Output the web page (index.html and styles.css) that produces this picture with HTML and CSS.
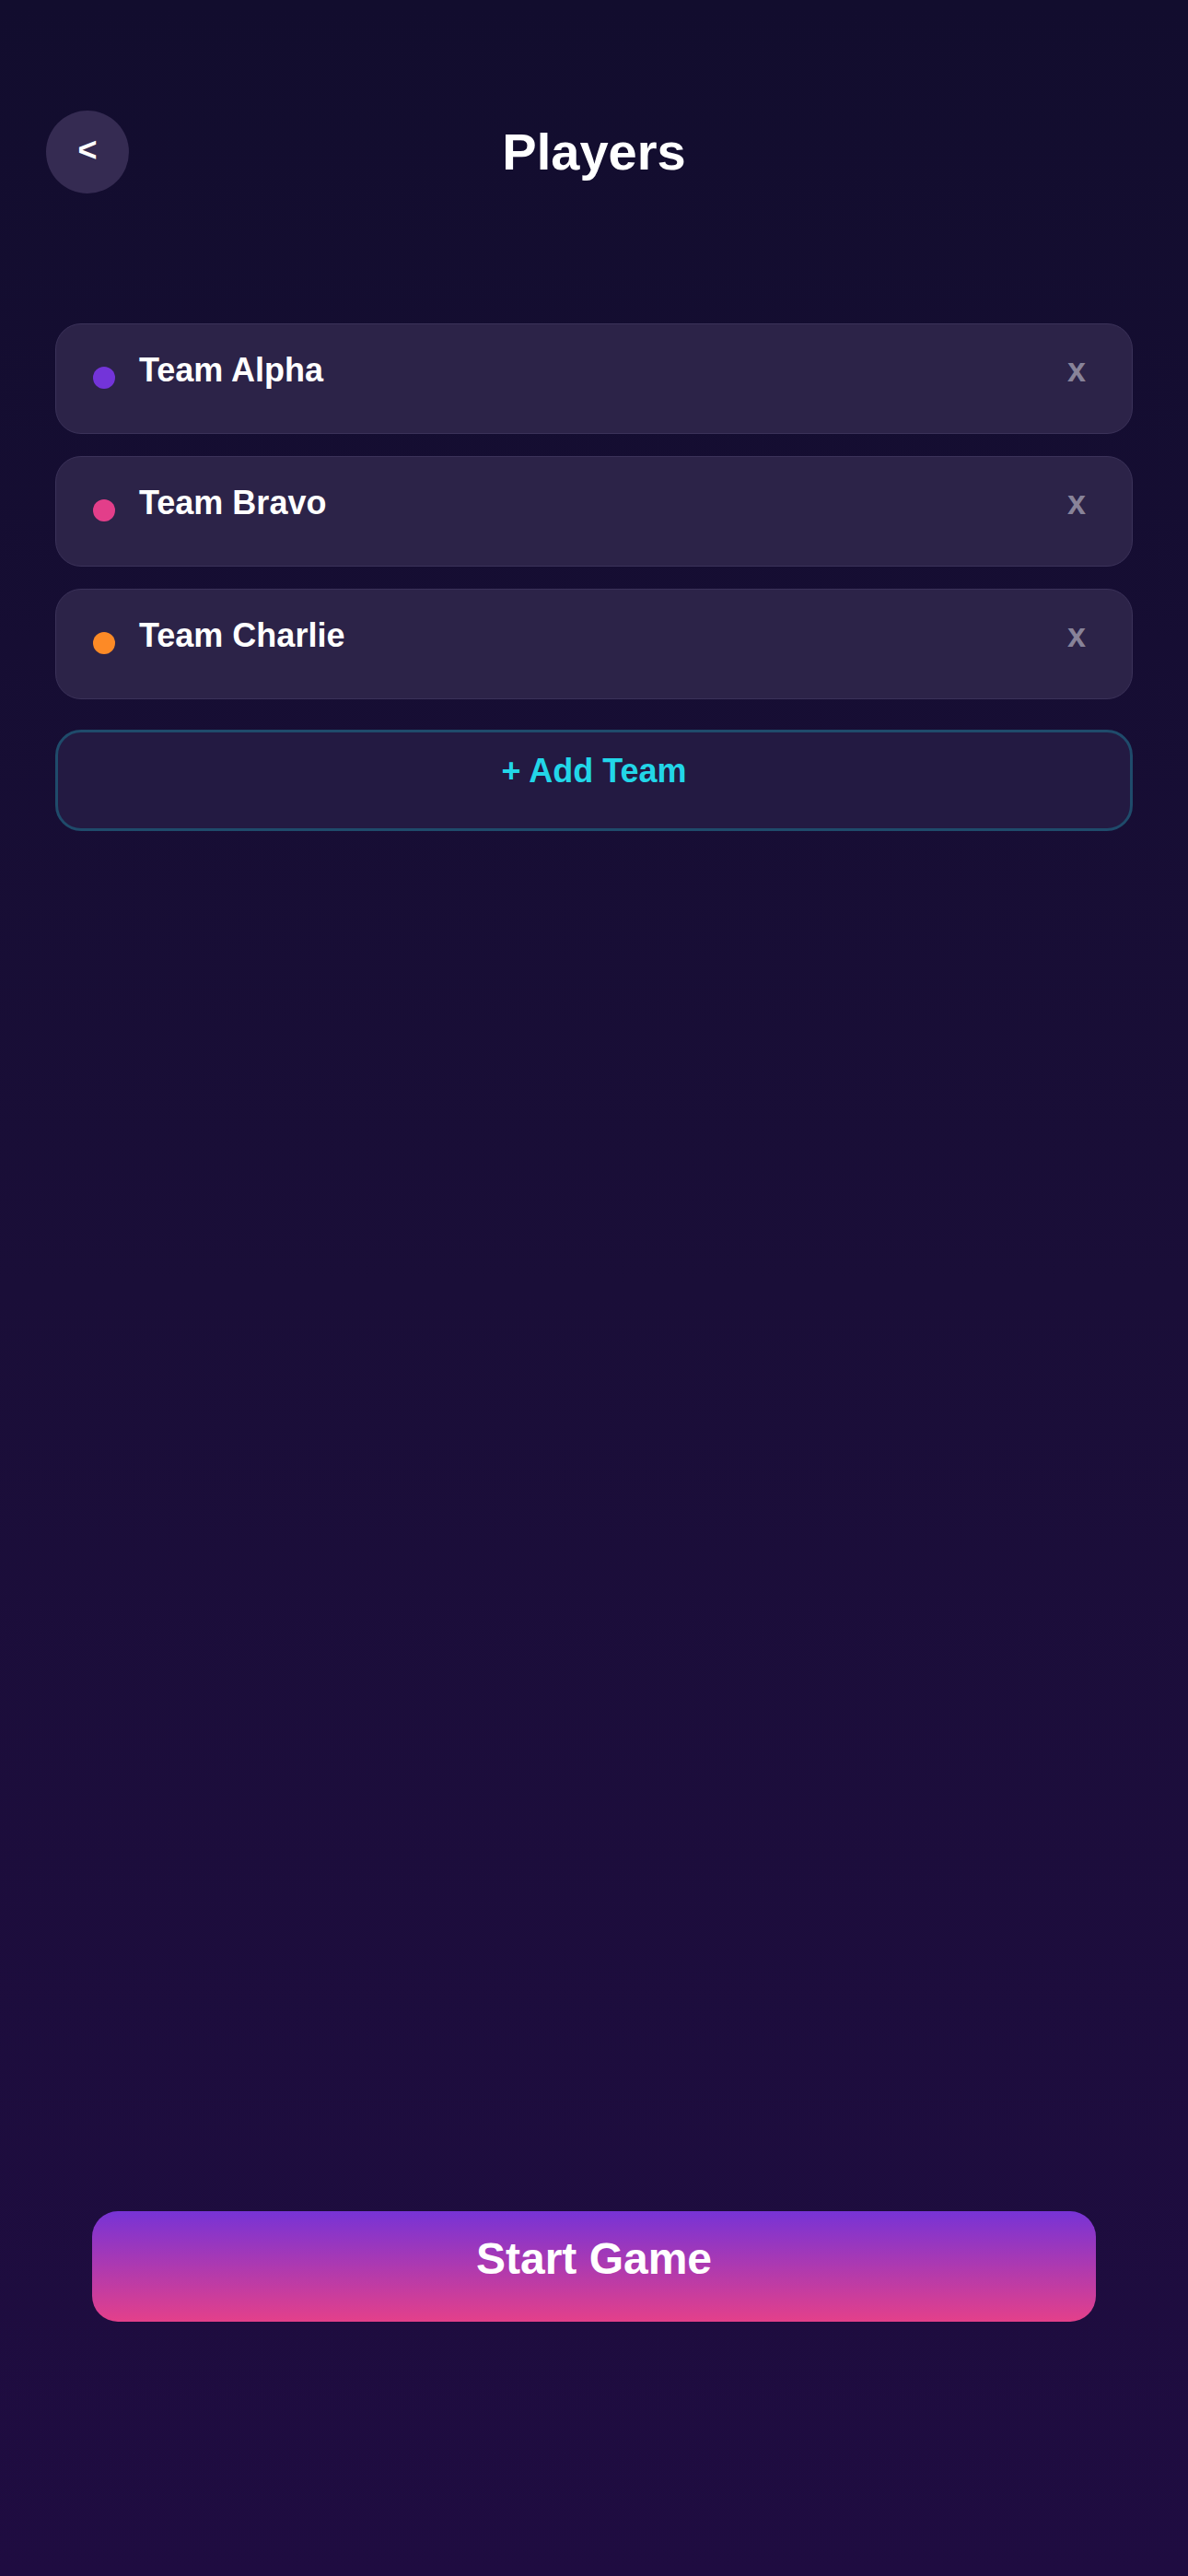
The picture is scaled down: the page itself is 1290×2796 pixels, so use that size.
FILE: index.html
```html
<!DOCTYPE html>
<html>
<head>
<meta charset="utf-8">
<link rel="stylesheet" href="styles.css">
</head>
<body>
<div class="page">
  <header class="header">
    <button class="back">&lt;</button>
    <h1 class="title">Players</h1>
    <div class="spacer-cell"></div>
  </header>
  <div class="list">
    <div class="card">
      <span class="dot dot-alpha"></span>
      <span class="name">Team Alpha</span>
      <span class="remove">x</span>
    </div>
    <div class="card">
      <span class="dot dot-bravo"></span>
      <span class="name">Team Bravo</span>
      <span class="remove">x</span>
    </div>
    <div class="card">
      <span class="dot dot-charlie"></span>
      <span class="name">Team Charlie</span>
      <span class="remove">x</span>
    </div>
    <button class="add">+ Add Team</button>
  </div>
  <div class="grow"></div>
  <div class="footer">
    <button class="start">Start Game</button>
  </div>
</div>
</body>
</html>
```

FILE: styles.css
```css
* { box-sizing: border-box; }
html, body { margin: 0; padding: 0; }
body {
  font-family: "Liberation Sans", Arial, sans-serif;
  background: linear-gradient(180deg, #120d2e 0%, #1a0e38 50%, #1f0c41 100%);
  color: #ffffff;
}
.page {
  min-height: 2796px;
  display: flex;
  flex-direction: column;
}
.header {
  display: grid;
  grid-template-columns: 90px 1fr 90px;
  align-items: center;
  padding: 120px 50px 0;
}
.back {
  width: 90px;
  height: 90px;
  border-radius: 50%;
  border: none;
  background: #352b52;
  color: #ffffff;
  font-family: "Liberation Sans", Arial, sans-serif;
  font-weight: 700;
  font-size: 36px;
  line-height: 40px;
  padding: 0 0 4px;
  display: flex;
  align-items: center;
  justify-content: center;
}
.title {
  margin: 0;
  text-align: center;
  font-size: 56px;
  line-height: 64px;
  font-weight: 700;
}
.list {
  margin-top: 141px;
  padding: 0 60px;
  display: flex;
  flex-direction: column;
  gap: 24px;
}
.card {
  height: 120px;
  border: 1px solid #3b3259;
  border-radius: 28px;
  background: #2c2348;
  padding: 30px 40px 0;
  display: flex;
  align-items: flex-start;
}
.dot {
  width: 24px;
  height: 24px;
  border-radius: 50%;
  margin-top: 16px;
  flex: none;
}
.dot-alpha { background: #7334d9; }
.dot-bravo { background: #e33e8a; }
.dot-charlie { background: #fd8a26; }
.name {
  margin-left: 26px;
  flex: 1;
  font-size: 36px;
  line-height: 40px;
  font-weight: 700;
  color: #ffffff;
}
.remove {
  font-size: 36px;
  line-height: 40px;
  font-weight: 700;
  color: #888399;
  padding: 0 10px;
}
.add {
  margin-top: 9px;
  height: 110px;
  border: 3px solid #1f4b6b;
  border-radius: 28px;
  background: #231a42;
  color: #22d6e8;
  font-family: "Liberation Sans", Arial, sans-serif;
  font-size: 36px;
  line-height: 40px;
  font-weight: 700;
  padding: 22px 0 0;
  display: flex;
  justify-content: center;
  align-items: flex-start;
}
.grow { flex: 1; }
.footer {
  padding: 0 100px 276px;
  display: flex;
}
.start {
  flex: 1;
  height: 120px;
  border: none;
  border-radius: 28px;
  background: linear-gradient(180deg, #7733d6 0%, #e4408a 100%);
  color: #ffffff;
  font-family: "Liberation Sans", Arial, sans-serif;
  font-size: 48px;
  line-height: 54px;
  font-weight: 700;
  padding: 25px 0 0;
  display: flex;
  justify-content: center;
  align-items: flex-start;
}
```
